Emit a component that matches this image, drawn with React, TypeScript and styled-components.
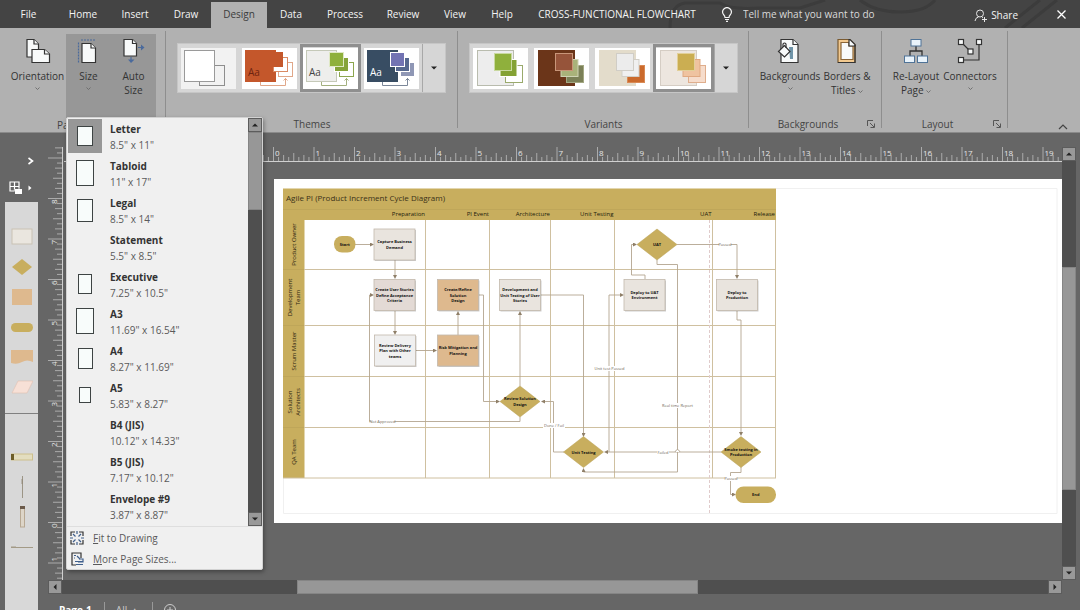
import React from "react";
import styled, { createGlobalStyle } from "styled-components";

const GlobalStyle = createGlobalStyle`
  * { box-sizing: border-box; }
  body { margin: 0; background: #666; font-family: "Open Sans", "Noto Sans", sans-serif; font-size: 10px; color: #333; }
  button, input { font: inherit; color: inherit; border: 0; padding: 0; margin: 0; background: none; }
  svg { display: block; flex: none; }
`;

/* ---------- shell ---------- */

const Shell = styled.div`
  display: flex;
  flex-direction: column;
  height: 100vh;
  overflow: hidden;
`;

const TabBar = styled.header`
  position: relative;
  display: flex;
  align-items: stretch;
  height: 28px;
  padding-top: 2px;
  background: #444;
  color: #f4f4f4;
`;

const Circuit = styled.svg`
  position: absolute;
  right: 0;
  top: 0;
`;

const Tabs = styled.nav`
  display: flex;
  position: relative;
`;

const Tab = styled.button<{ $active?: boolean; $width: number }>`
  padding-bottom: 2px;
  width: ${(p) => p.$width}px;
  white-space: nowrap;
  font-weight: ${(p) => (p.$active ? 400 : 500)};
  color: ${(p) => (p.$active ? "#3c3c3c" : "#f4f4f4")};
  background: ${(p) => (p.$active ? "#b1b1b1" : "transparent")};
`;

const TellMe = styled.label`
  position: relative;
  display: flex;
  align-items: center;
  gap: 10px;
  flex: 1;
  padding: 0 0 2px 12px;
`;

const TellInput = styled.input`
  width: 150px;
  outline: 0;
  &::placeholder { color: #dadada; opacity: 1; }
`;

const ShareButton = styled.button`
  position: relative;
  display: flex;
  align-items: center;
  gap: 4px;
  font-weight: 500;
`;

const CloseButton = styled.button`
  position: relative;
  display: grid;
  place-items: center;
  width: 38px;
  margin-left: 24px;
  padding-bottom: 2px;
`;

/* ---------- ribbon ---------- */

const Ribbon = styled.section`
  display: flex;
  height: 105px;
  background: #b1b1b1;
  border-bottom: 1px solid #8a8a8a;
`;

const Group = styled.div<{ $width: number }>`
  position: relative;
  display: flex;
  flex-direction: column;
  flex: none;
  width: ${(p) => p.$width}px;
  padding-top: 6px;
  &::after {
    content: "";
    position: absolute;
    right: 0;
    top: 3px;
    bottom: 4px;
    width: 1px;
    background: #8e8e8e;
  }
`;

const GroupBody = styled.div<{ $inset: number }>`
  display: flex;
  height: 84px;
  padding-left: ${(p) => p.$inset}px;
`;

const Caption = styled.div`
  display: flex;
  align-items: center;
  height: 16px;
  color: #444;
  & > svg { margin-right: 7px; }
`;

const CaptionText = styled.span`
  flex: 1;
  text-align: center;
`;

const Tool = styled.button<{ $width: number }>`
  display: flex;
  flex-direction: column;
  align-items: center;
  width: ${(p) => p.$width}px;
  padding-top: 4px;
  line-height: 14px;
  color: #333;
  & > svg:last-child { margin-top: 4px; }
`;

const ToolLabel = styled.span`
  margin-top: 5px;
  white-space: pre;
`;

const Pressed = styled.div`
  position: relative;
  display: flex;
  width: 90px;
  height: 84px;
  background: #979797;
`;

const Gallery = styled.div`
  display: flex;
  height: 50px;
  margin: 9px 0 0 11px;
  border: 1px solid #c6c6c6;
  background: #d6d6d6;
`;

const Thumb = styled.button<{ $on?: boolean }>`
  display: grid;
  place-items: center;
  width: 61px;
  border: 3px solid ${(p) => (p.$on ? "#8f8f8f" : "transparent")};
`;

const GalleryMore = styled.button`
  display: grid;
  place-items: center;
  width: 23px;
  border-left: 1px solid #a8a8a8;
`;

const Collapse = styled.button`
  align-self: flex-end;
  margin: 0 12px 1px auto;
`;

/* ---------- page size menu ---------- */

const Menu = styled.div`
  position: absolute;
  z-index: 5;
  left: 0;
  top: 83px;
  width: 197px;
  background: #f0f0f0;
  border: 1px solid #d2d2d2;
  border-radius: 2px;
  box-shadow: 1px 2px 4px rgba(0, 0, 0, 0.35);
`;

const MenuScroll = styled.div`
  display: flex;
  height: 409px;
  border-bottom: 1px solid #dedede;
`;

const SizeList = styled.div`
  flex: 1;
  padding: 1px;
`;

const SizeItem = styled.button`
  display: flex;
  width: 100%;
  height: 37px;
  text-align: left;
`;

const SizeIcon = styled.span<{ $on?: boolean }>`
  display: grid;
  place-items: center;
  width: 34px;
  height: 34px;
  background: ${(p) => (p.$on ? "#979797" : "transparent")};
`;

const SizeText = styled.span`
  display: flex;
  flex-direction: column;
  padding: 2px 0 0 8px;
  line-height: 16px;
  color: #5a5a5a;
`;

const SizeName = styled.strong`
  font-weight: 700;
  color: #333;
`;

const Command = styled.button`
  display: flex;
  align-items: center;
  gap: 9px;
  width: 100%;
  height: 21px;
  padding-left: 3px;
  color: #5a5a5a;
`;

/* ---------- scroll bars ---------- */

const VBar = styled.div`
  display: flex;
  flex-direction: column;
  flex: none;
  width: 14px;
  background: #4f4f4f;
`;

const HBar = styled.div`
  display: flex;
  flex: none;
  height: 14px;
  margin-right: 14px;
  background: #4f4f4f;
`;

const Arrow = styled.button`
  display: grid;
  place-items: center;
  flex: none;
  width: 14px;
  height: 14px;
  background: #999;
  border: 1px solid #5c5c5c;
`;

const Track = styled.div<{ $row?: boolean }>`
  display: flex;
  flex-direction: ${(p) => (p.$row ? "row" : "column")};
  flex: 1;
`;

const Gap = styled.div<{ $grow: number }>`
  flex: ${(p) => p.$grow} 0 0;
`;

const Knob = styled.div<{ $grow: number }>`
  flex: ${(p) => p.$grow} 0 0;
  background: #979797;
  border: 1px solid #858585;
`;

/* ---------- workspace ---------- */

const Workspace = styled.main`
  display: flex;
  flex: 1;
  min-height: 0;
  background: #666;
`;

const ShapesPane = styled.aside`
  display: flex;
  flex-direction: column;
  flex: none;
  width: 48px;
  padding: 22px 10px 0 5px;
`;

const PaneButton = styled.button<{ $end?: boolean }>`
  display: flex;
  align-items: center;
  justify-content: ${(p) => (p.$end ? "flex-end" : "flex-start")};
  gap: 5px;
  height: ${(p) => (p.$end ? 12 : 42)}px;
  padding: 0 4px;
`;

const Stencil = styled.div`
  display: flex;
  flex-direction: column;
  flex: 1;
  margin-top: -7px;
  padding-top: 20px;
  background: #d8d8d8;
`;

const StencilItem = styled.button`
  display: grid;
  place-items: center;
  height: 30px;
`;

const StencilRule = styled.hr`
  width: 100%;
  height: 1px;
  margin: 11px 0 28px;
  border: 0;
  background: #808080;
`;

const Editor = styled.div`
  display: flex;
  flex-direction: column;
  flex: 1;
  min-width: 0;
  padding: 14px 4px 0 0;
`;

const Stage = styled.div`
  display: flex;
  flex: none;
  height: 433px;
`;

const SideRuler = styled.div`
  flex: none;
  width: 16px;
  overflow: hidden;
`;

const View = styled.div`
  flex: 1;
  min-width: 0;
  overflow: hidden;
`;

const Sheet = styled.div`
  height: 344px;
  margin: 16px 0 0 210px;
  overflow: hidden;
  background: #fff;
`;

const PageTabs = styled.div`
  display: flex;
  flex: none;
  align-items: center;
  gap: 11px;
  height: 32px;
  padding-left: 11px;
  color: #f4f4f4;
`;

const PageTab = styled.button<{ $on?: boolean }>`
  padding-right: 12px;
  border-right: 1px solid #999;
  font-weight: ${(p) => (p.$on ? 700 : 400)};
  line-height: 16px;
  color: ${(p) => (p.$on ? "#fff" : "#ccc")};
`;

/* ---------- small drawings ---------- */

const Tri = ({ d, fill = "#222" }: { d: "up" | "down" | "left" | "right"; fill?: string }) => {
  const paths = { up: "M1 5.500 4 2.500 7 5.500z", down: "M1 2.500 4 5.500 7 2.500z", left: "M5.500 1 2.500 4 5.500 7z", right: "M2.500 1 5.500 4 2.500 7z" };
  return <svg width="8" height="8" viewBox="0 0 8 8"><path d={paths[d]} fill={fill} /></svg>;
};

const CaretSvg = styled.svg`
  display: inline-block;
  vertical-align: middle;
`;

const Caret = () => (
  <CaretSvg width="5" height="3" viewBox="0 0 5 3">
    <path d="M0.500 0.500 2.500 2.500 4.500 0.500" fill="none" stroke="#6a6a6a" strokeWidth="0.900" />
  </CaretSvg>
);

const OrientationIcon = () => (
  <svg width="26" height="26" viewBox="0 0 26 26" fill="#f8fafa" stroke="#333" strokeWidth="1.200">
    <path d="M2 1.500h7l4.500 4.500v13H2z" /><path d="M9 1.500V6h4.500" />
    <path d="M7 11.500h12.500l5 4.500v8.500H7z" /><path d="M19.500 11.500V16h5" />
  </svg>
);

const SizeIconArt = () => (
  <svg width="26" height="26" viewBox="0 0 26 26" fill="#f8fafa" stroke="#333" strokeWidth="1.200">
    <path d="M6 5.500h9l4.500 4.500v14.500H6z" /><path d="M15 5.500V10h4.500" />
    <path d="M5 2h15M2.500 4.500v20" stroke="#4a6a9c" strokeDasharray="2 1" />
  </svg>
);

const AutoSizeIcon = () => (
  <svg width="26" height="26" viewBox="0 0 26 26" fill="#f8fafa" stroke="#333" strokeWidth="1.200">
    <path d="M3 1.500h8.500l4 4V18H3z" /><path d="M11.500 1.500v4h4" />
    <path d="M17 9.500h5M10 19v4" stroke="#4a6a9c" /><path d="M20 6.500 23.500 9.500 20 12.500zM7 21.500h6.500L10 25z" fill="#4a6a9c" stroke="none" />
  </svg>
);

const BackgroundsIcon = () => (
  <svg width="26" height="26" viewBox="0 0 26 26" fill="#f8fafa" stroke="#333" strokeWidth="1.200">
    <path d="M4 1.500h12l5 5v18H4z" /><path d="M16 1.500v5h5" />
    <path d="M12 9h4v12h-3z" fill="#6f94a8" stroke="none" />
    <path d="M1.500 13.500 7.500 7.500l5.500 6-5.500 5.500z" /><path d="M6 9V6q1.500-2 3 0v4" fill="none" />
  </svg>
);

const BordersIcon = () => (
  <svg width="26" height="26" viewBox="0 0 26 26" fill="#f2c98f" stroke="#333" strokeWidth="1.200">
    <path d="M4 1.500h12l5 5v18H4z" stroke="#7a5a30" /><path d="M7 4.500h8V8h4v13.500H7z" fill="#f8fafa" stroke="#8a6538" />
    <path d="M15 1.500V8h6V6.500L16 1.500z" fill="#f8fafa" /><path d="M21 7v17.500H4" fill="none" />
  </svg>
);

const ReLayoutIcon = () => (
  <svg width="26" height="26" viewBox="0 0 26 26" fill="#e9f3fb" stroke="#4f7397">
    <path d="M13 8v5M7 18v-5h12v5" fill="none" stroke="#333" strokeWidth="1.300" />
    <rect x="8" y="1.500" width="10" height="6.500" /><rect x="1.500" y="18" width="10" height="6.500" /><rect x="14.500" y="18" width="10" height="6.500" />
  </svg>
);

const ConnectorsIcon = () => (
  <svg width="26" height="26" viewBox="0 0 26 26" fill="#f8fafa" stroke="#333" strokeWidth="1.200">
    <path d="M4 4l9 9M22 4v18H4" fill="none" />
    <rect x="1.500" y="1.500" width="5" height="5" /><rect x="19.500" y="1.500" width="5" height="5" /><rect x="11" y="11" width="5" height="5" /><rect x="1.500" y="19.500" width="5" height="5" />
  </svg>
);

const Launcher = () => (
  <svg width="8" height="8" viewBox="0 0 8 8" fill="none" stroke="#555"><path d="M0.500 6V0.500H6M3 3l4 4M7.500 3.500v4h-4" /></svg>
);

type ThemeArt = { main: string; edge: string; boxes: [string, string][]; aa?: string; link?: string };

const themes: ThemeArt[] = [
  { main: "#fff", edge: "#9a9a9a", boxes: [] },
  { main: "#c4572b", edge: "#c4572b", boxes: [["#fff", "#e0a789"], ["#fff", "#d98a63"], ["#c4572b", "#c4572b"]], aa: "#6e2410", link: "#e0a789" },
  { main: "#eeeeec", edge: "#c5c9b8", boxes: [["#fff", "#8ca64e"], ["#86a339", "#fff"], ["#8fb03c", "#dfe8c4"]], aa: "#444", link: "#a3b07e" },
  { main: "#384d63", edge: "#384d63", boxes: [["#8f97b5", "#fff"], ["#56688f", "#fff"], ["#7273b3", "#fff"]], aa: "#fff", link: "#7b8799" },
];

const ThemeThumb = ({ art }: { art: ThemeArt }) => (
  <svg width="55" height="41" viewBox="0 0 55 41">
    <rect width="55" height="41" fill={art.boxes.length ? "#fff" : "#f2f2f2"} />
    {art.boxes.length === 0 && <rect x="18.500" y="17.500" width="25" height="20" fill="none" stroke="#8e8e8e" />}
    {art.link && <path d="M18.500 34v3.500h25V30M41.500 32.500l2-2 2 2" fill="none" stroke={art.link} />}
    <rect x="3.500" y="2.500" width="30" height="31" fill={art.main} stroke={art.edge} />
    {art.boxes.map(([fill, edge], i) => (
      <rect key={i} x={36.5 - i * 5} y={14.5 - i * 5} width="14" height="14" fill={fill} stroke={edge} />
    ))}
    {art.aa && <text x="6" y="28" fontSize="10" fill={art.aa}>Aa</text>}
  </svg>
);

const variants: ThemeArt[] = [
  { main: "#ededed", edge: "#b9bcae", boxes: [["#fff", "#9aaa6c"], ["#84a234", "#fff"], ["#8fb03c", "#c9d9a0"]] },
  { main: "#6b3519", edge: "#6b3519", boxes: [["#7b8057", "#a3a883"], ["#a9b27a", "#cfd3b4"], ["#96543a", "#c99679"]] },
  { main: "#e3dccb", edge: "#e3dccb", boxes: [["#cb6a2c", "#d98a55"], ["#f0f0f0", "#d2cfc8"], ["#ececec", "#d0cdc6"]] },
  { main: "#ede6df", edge: "#d5cdc4", boxes: [["#f6dccb", "#dfae8d"], ["#efc3a0", "#e0a982"], ["#cbae52", "#e2d09a"]] },
];

const VariantThumb = ({ art }: { art: ThemeArt }) => (
  <svg width="55" height="41" viewBox="0 0 55 41">
    <rect width="55" height="41" fill="#fff" />
    <rect x="4.500" y="2.500" width="36" height="35" fill={art.main} stroke={art.edge} />
    {art.boxes.map(([fill, edge], i) => (
      <rect key={i} x={32.5 - i * 5.500} y={17.500 - i * 6} width="17" height="17" fill={fill} stroke={edge} />
    ))}
  </svg>
);

/* ---------- rulers ---------- */

const INCH = 40.5;

const TopRuler = () => {
  const ticks = [];
  for (let i = -40; i <= 240; i++) {
    const x = 209.5 + (i * INCH) / 8;
    if (x < 0) continue;
    const top = i % 8 === 0 ? 0 : i % 4 === 0 ? 6 : i % 2 === 0 ? 8 : 10;
    ticks.push(<path key={i} d={`M${x} ${top}V15`} />);
  }
  return (
    <svg width="1400" height="16" viewBox="0 0 1400 16" stroke="#bdbdbd" strokeWidth="0.8">
      {ticks}
      <path d="M0 14.500H1400" stroke="#d0d0d0" strokeWidth="1" />
      {Array.from({ length: 20 }, (_, n) => (
        <text key={n} x={211 + n * INCH} y="9" fontSize="8" fill="#e6e6e6" stroke="none">{n}</text>
      ))}
    </svg>
  );
};

const LeftRuler = () => {
  const ticks = [];
  for (let i = -12; i <= 77; i++) {
    const y = 375.5 - (i * INCH) / 8;
    const left = i % 8 === 0 ? 0 : i % 4 === 0 ? 5 : i % 2 === 0 ? 7 : 9;
    ticks.push(<path key={i} d={`M${left} ${y}H15`} />);
  }
  return (
    <svg width="16" height="433" viewBox="0 0 16 433" stroke="#bdbdbd" strokeWidth="0.8">
      {ticks}
      <path d="M14.500 0V433" stroke="#d0d0d0" strokeWidth="1" />
      {[-1, 0, 1, 2, 3, 4, 5, 6, 7, 8].map((n) => (
        <text key={n} transform={`translate(9 ${375 - n * INCH + (n < 0 ? -1 : 6)}) rotate(-90)`} fontSize="8" fill="#e6e6e6" stroke="none">{Math.abs(n)}</text>
      ))}
    </svg>
  );
};

/* ---------- diagram ---------- */

const GOLD = "#c8ae5e";
const STONE = "#e9e4de";
const PEACH = "#deb98e";

const Lines = ({ x, y, rows }: { x: number; y: number; rows: string[] }) => (
  <text fontSize="4" fontWeight="700" fill="#111" textAnchor="middle">
    {rows.map((r, i) => (
      <tspan key={i} x={x} y={y + 1.5 + (i - (rows.length - 1) / 2) * 5.5}>{r}</tspan>
    ))}
  </text>
);

const Box = ({ x, y, fill = STONE, rows }: { x: number; y: number; fill?: string; rows: string[] }) => (
  <g>
    <rect x={x + 1} y={y + 1} width="41" height="31" fill="#000" opacity="0.200" />
    <rect x={x} y={y} width="41" height="31" fill={fill} stroke="#c2b8ac" strokeWidth="0.800" />
    <Lines x={x + 20.5} y={y + 15.5} rows={rows} />
  </g>
);

const Decision = ({ x, y, rows }: { x: number; y: number; rows: string[] }) => (
  <g>
    <path d={`M${x - 20} ${y}L${x} ${y - 15.5}L${x + 20} ${y}L${x} ${y + 15.5}z`} fill={GOLD} stroke="#b9a056" strokeWidth="0.5" />
    <Lines x={x} y={y} rows={rows} />
  </g>
);

const Pill = ({ x, y, w, label }: { x: number; y: number; w: number; label: string }) => (
  <g>
    <rect x={x} y={y} width={w} height="16.500" rx="8" fill={GOLD} />
    <Lines x={x + w / 2} y={y + 8} rows={[label]} />
  </g>
);

const phases: [string, number][] = [["Preparation", 425], ["PI Event", 489], ["Architecture", 550], ["Unit Testing", 613.5], ["UAT", 711.5], ["Release", 775]];
const lanes: [string[], number][] = [[["Product Owner"], 244.5], [["Development", "Team"], 297.5], [["Scrum Master"], 351], [["Solution", "Architects"], 402], [["QA Team"], 452]];
const links = [
  "M355 244.500H372", "M395 260V277", "M395 311V333", "M416 350.500H435", "M458 335V313",
  "M479 295H483.500V401.500H498", "M520 386V313", "M520 417V421.500H369.500V295H372", "M541 295H583.500V435",
  "M564 452H553.500V401.500H543", "M721 452H606", "M609 452V295H622", "M645 279V275H631.500V244.500H635",
  "M657 260V264.500H677.500V472H583.500V470", "M677 244.500H737V277", "M737 311V320H741V434", "M741 467V472.500H730.500V494.500H734",
];
const notes: [string, number, number][] = [["Not Approved", 382.5, 423], ["Unit test Passed", 609.5, 370], ["Real time Report", 677.5, 407], ["Done / Fail", 554, 427], ["Failed", 663, 453.5], ["Passed", 725, 246], ["Passed", 731, 480]];

const Diagram = () => (
  <svg width="1000" height="344" viewBox="274 179 1000 344">
    <defs>
      <marker id="tip" viewBox="0 0 4 4" refX="2" refY="2" markerWidth="4" markerHeight="4" markerUnits="userSpaceOnUse" orient="auto">
        <path d="M0 0 4 2 0 4z" fill="#8f7f68" />
      </marker>
    </defs>
    <path d="M283.500 478V513.500H1057M776 188.500H1057V513.500" fill="none" stroke="#f0f0f0" />
    <path d="M283 188.500H776V220H304.500V478H283z" fill={GOLD} />
    <path d="M425.500 220V478M489.500 220V478M550.500 220V478M614.500 220V478M712.500 220V478M775.500 220V478M304 269.500H776M304 325.500H776M304 376.500H776M304 427.500H776M283 478H776" fill="none" stroke="#cfc0a0" />
    <path d="M283 209.500H776M283 269.500H304M283 325.500H304M283 376.500H304M283 427.500H304" stroke="#b79e54" strokeWidth="0.500" />
    <path d="M709.500 220V513" stroke="#e0cbcb" strokeDasharray="3 2" />
    <text x="286" y="201" fontSize="8" fill="#3a3118">Agile PI (Product Increment Cycle Diagram)</text>
    {phases.map(([name, x]) => <text key={name} x={x} y="216" fontSize="6" fontWeight="500" fill="#221c0c" textAnchor="end">{name}</text>)}
    {lanes.map(([rows, y]) => (
      <text key={rows[0]} transform={`translate(0 ${y}) rotate(-90)`} fontSize="6" fill="#2c2410" textAnchor="middle">
        {rows.map((r, i) => <tspan key={r} x="0" y={rows.length === 1 ? 296 : 292 + i * 8}>{r}</tspan>)}
      </text>
    ))}
    {links.map((d) => <path key={d} d={d} fill="none" stroke="#b3a590" strokeWidth="0.900" markerEnd="url(#tip)" />)}
    <path d="M675 452q2.500-5 5 0" fill="#fff" stroke="#a89882" strokeWidth="0.800" />
    {notes.map(([t, x, y], i) => (
      <g key={i}>
        <rect x={x - t.length} y={y - 4} width={t.length * 2} height="5" fill="#fff" />
        <text x={x} y={y} fontSize="4" fill="#6f6555" textAnchor="middle">{t}</text>
      </g>
    ))}
    <Pill x={334} y={236} w={21.5} label="Start" />
    <Pill x={735.5} y={486.5} w={40.5} label="End" />
    <Box x={374} y={229} rows={["Capture Business", "Demand"]} />
    <Box x={374} y={279.5} rows={["Create User Stories", "Define Acceptance", "Criteria"]} fill="#e3dad5" />
    <Box x={437.5} y={279.5} rows={["Create/Refine", "Solution", "Design"]} fill={PEACH} />
    <Box x={499.5} y={279.5} rows={["Development and", "Unit Testing of User", "Stories"]} />
    <Box x={374.5} y={335} rows={["Review Delivery", "Plan with Other", "teams"]} fill="#f0f0f0" />
    <Box x={437.5} y={335} rows={["Risk Mitigation and", "Planning"]} fill={PEACH} />
    <Box x={624} y={279.5} rows={["Deploy to UAT", "Environment"]} />
    <Box x={716.5} y={279.5} rows={["Deploy to", "Production"]} />
    <Decision x={657} y={244.5} rows={["UAT"]} />
    <Decision x={520} y={401.5} rows={["Review Solution", "Design"]} />
    <Decision x={583.5} y={452} rows={["Unit Testing"]} />
    <Decision x={741} y={452} rows={["Smoke testing in", "Production"]} />
  </svg>
);

/* ---------- data ---------- */

const sizes: { name: string; dims: string; w?: number; h?: number }[] = [
  { name: "Letter", dims: '8.5" x 11"', w: 15, h: 19 },
  { name: "Tabloid", dims: '11" x 17"', w: 17, h: 25 },
  { name: "Legal", dims: '8.5" x 14"', w: 15, h: 22 },
  { name: "Statement", dims: '5.5" x 8.5"' },
  { name: "Executive", dims: '7.25" x 10.5"', w: 13, h: 19 },
  { name: "A3", dims: '11.69" x 16.54"', w: 17, h: 25 },
  { name: "A4", dims: '8.27" x 11.69"', w: 14, h: 20 },
  { name: "A5", dims: '5.83" x 8.27"', w: 11, h: 15 },
  { name: "B4 (JIS)", dims: '10.12" x 14.33"' },
  { name: "B5 (JIS)", dims: '7.17" x 10.12"' },
  { name: "Envelope #9", dims: '3.87" x 8.87"' },
];

const stencilTop = [
  <rect key="a" x="1" y="3" width="20" height="15" fill="#eae6df" stroke="#c9c2b4" />,
  <path key="b" d="M1 11 11 3 21 11 11 19z" fill={GOLD} />,
  <rect key="c" x="1" y="3" width="20" height="16" fill={PEACH} />,
  <rect key="d" x="0" y="7" width="22" height="9" rx="4.500" fill={GOLD} />,
  <path key="e" d="M0 4H22V16Q16 13 11 16T0 17z" fill={PEACH} />,
  <path key="f" d="M1 17 7 5H22L16 17z" fill="#f7e0d6" stroke="#dfbfb0" strokeWidth="0.600" />,
];

const stencilBottom = [
  <g key="a"><rect x="0.500" y="8" width="21" height="6" fill="#e3ddbf" stroke="#cdbf8c" /><rect x="0" y="8" width="3" height="6" fill="#6d5d27" /></g>,
  <path key="b" d="M11.500 0V22M11 3V8" stroke="#8d8471" strokeWidth="0.800" />,
  <g key="c"><rect x="9.500" y="1" width="4" height="20" fill="#ddd5c8" stroke="#b7a893" /><rect x="9" y="0" width="5" height="3" fill="#6b5a4a" /></g>,
  <path key="d" d="M0 11.500H22M0 11H5" stroke="#a39a86" />,
];

const tabs: [string, number][] = [
  ["File", 57], ["Home", 52], ["Insert", 52], ["Draw", 50], ["Design", 56], ["Data", 48],
  ["Process", 60], ["Review", 56], ["View", 48], ["Help", 46], ["CROSS-FUNCTIONAL FLOWCHART", 184],
];

export default function App() {
  return (
    <>
      <GlobalStyle />
      <Shell>
        <TabBar>
          <Circuit width="470" height="28" viewBox="0 0 470 28" fill="none" stroke="#3c3c3c" strokeWidth="3">
            <path d="M60 28Q60 5 75 3H110Q120 10 150 8H190L215 0M250 0Q265 12 290 12T325 0M395 28 430 0M412 28 447 0" />
          </Circuit>
          <Tabs>
            {tabs.map(([t, w]) => <Tab key={t} $active={t === "Design"} $width={w}>{t}</Tab>)}
          </Tabs>
          <TellMe>
            <svg width="12" height="15" viewBox="0 0 12 15" fill="none" stroke="#f4f4f4" strokeWidth="1.200">
              <path d="M4 10.500Q4 9 2.500 7.500A4.300 4.300 0 1 1 9.500 7.500Q8 9 8 10.500zM4 12.500h4M5 14.300h2" />
            </svg>
            <TellInput placeholder="Tell me what you want to do" aria-label="Tell me what you want to do" />
          </TellMe>
          <ShareButton>
            <svg width="13" height="13" viewBox="0 0 13 13" fill="none" stroke="#e6e6e6">
              <circle cx="6" cy="4.500" r="3.500" /><path d="M1 12Q1.500 8.500 4.500 8M8 8.200 9 9M8 10.500h5M10.500 8v5" />
            </svg>
            Share
          </ShareButton>
          <CloseButton aria-label="Close">
            <svg width="9" height="9" viewBox="0 0 9 9" stroke="#fff" strokeWidth="1.300"><path d="M0.500 0.500 8.500 8.500M8.500 0.500 0.500 8.500" /></svg>
          </CloseButton>
        </TabBar>

        <Ribbon>
          <Group $width={166}>
            <GroupBody $inset={9}>
              <Tool $width={57}><OrientationIcon /><ToolLabel>Orientation</ToolLabel><Caret /></Tool>
              <Pressed>
                <Tool $width={45}><SizeIconArt /><ToolLabel>Size</ToolLabel><Caret /></Tool>
                <Tool $width={45}><AutoSizeIcon /><ToolLabel>{"Auto\nSize"}</ToolLabel></Tool>
                <Menu>
                  <MenuScroll>
                    <SizeList>
                      {sizes.map((s) => (
                        <SizeItem key={s.name}>
                          <SizeIcon $on={s.name === "Letter"}>
                            {s.w && s.h && (
                              <svg width={s.w + 1} height={s.h + 1}>
                                <rect x="0.500" y="0.500" width={s.w} height={s.h} fill="#f8fcfb" stroke="#3e4444" />
                              </svg>
                            )}
                          </SizeIcon>
                          <SizeText><SizeName>{s.name}</SizeName>{s.dims}</SizeText>
                        </SizeItem>
                      ))}
                    </SizeList>
                    <VBar>
                      <Arrow aria-label="Scroll up"><Tri d="up" /></Arrow>
                      <Track><Knob $grow={76} /><Gap $grow={304} /></Track>
                      <Arrow aria-label="Scroll down"><Tri d="down" /></Arrow>
                    </VBar>
                  </MenuScroll>
                  <Command>
                    <svg width="14" height="14" viewBox="0 0 14 14" fill="none" stroke="#3f5f8c" strokeWidth="1.200">
                      <path d="M1 5V1h4M9 1h4v4M13 9v4H9M5 13H1V9" stroke="#333" />
                      <path d="M3 3l2.500 2.500M11 3 8.500 5.500M3 11l2.500-2.500M11 11 8.500 8.500M7 0v3M7 11v3M0 7h3M11 7h3" />
                    </svg>
                    <span><u>F</u>it to Drawing</span>
                  </Command>
                  <Command>
                    <svg width="14" height="14" viewBox="0 0 14 14" fill="none" stroke="#3f5f8c" strokeWidth="1.200">
                      <path d="M6 13H2V1h9v5" stroke="#333" /><path d="M4 3.500h2M4 6h1M7 4l3 3" />
                      <path d="M5 9.500h8M6 12.500h7M9 7h4v3H8" />
                    </svg>
                    <span><u>M</u>ore Page Sizes...</span>
                  </Command>
                </Menu>
              </Pressed>
            </GroupBody>
            <Caption><CaptionText>Page Setup</CaptionText></Caption>
          </Group>
          <Group $width={292}>
            <GroupBody $inset={0}>
              <Gallery>
                {themes.map((t, i) => <Thumb key={i} $on={i === 2} aria-label={`Theme ${i + 1}`}><ThemeThumb art={t} /></Thumb>)}
                <GalleryMore aria-label="More themes"><Tri d="down" /></GalleryMore>
              </Gallery>
            </GroupBody>
            <Caption><CaptionText>Themes</CaptionText></Caption>
          </Group>
          <Group $width={291}>
            <GroupBody $inset={0}>
              <Gallery>
                {variants.map((t, i) => <Thumb key={i} $on={i === 3} aria-label={`Variant ${i + 1}`}><VariantThumb art={t} /></Thumb>)}
                <GalleryMore aria-label="More variants"><Tri d="down" /></GalleryMore>
              </Gallery>
            </GroupBody>
            <Caption><CaptionText>Variants</CaptionText></Caption>
          </Group>
          <Group $width={133}>
            <GroupBody $inset={10}>
              <Tool $width={62}><BackgroundsIcon /><ToolLabel>Backgrounds</ToolLabel><Caret /></Tool>
              <Tool $width={52}><BordersIcon /><ToolLabel>{"Borders &\nTitles "}<Caret /></ToolLabel></Tool>
            </GroupBody>
            <Caption><CaptionText>Backgrounds</CaptionText><Launcher /></Caption>
          </Group>
          <Group $width={126}>
            <GroupBody $inset={8}>
              <Tool $width={52}><ReLayoutIcon /><ToolLabel>{"Re-Layout\nPage "}<Caret /></ToolLabel></Tool>
              <Tool $width={56}><ConnectorsIcon /><ToolLabel>Connectors</ToolLabel><Caret /></Tool>
            </GroupBody>
            <Caption><CaptionText>Layout</CaptionText><Launcher /></Caption>
          </Group>
          <Collapse aria-label="Collapse the ribbon">
            <svg width="10" height="8" viewBox="0 0 10 8" fill="none" stroke="#444" strokeWidth="1.200"><path d="M1 6 5 2 9 6" /></svg>
          </Collapse>
        </Ribbon>

        <Workspace>
          <ShapesPane>
            <PaneButton $end aria-label="Expand the Shapes window">
              <svg width="6" height="8" viewBox="0 0 6 8" fill="none" stroke="#fff" strokeWidth="1.600"><path d="M0.500 1 4.500 4 0.500 7" /></svg>
            </PaneButton>
            <PaneButton aria-label="Stencils">
              <svg width="14" height="14" viewBox="0 0 14 14" fill="none" stroke="#fff" strokeWidth="1.200">
                <path d="M1 1h9v9H1zM5.500 1v9M1 5.500h9" /><path d="M6 8h7v5H6z" fill="#fff" stroke="#666" strokeWidth="0.600" /><path d="M6 8h7v5H6zM8 6.500h4" fill="#fff" stroke="none" />
              </svg>
              <svg width="4" height="6" viewBox="0 0 4 6"><path d="M0.500 0.500 3.500 3 0.500 5.500z" fill="#fff" /></svg>
            </PaneButton>
            <Stencil>
              {stencilTop.map((s, i) => <StencilItem key={i} aria-label={`Shape ${i + 1}`}><svg width="22" height="22" viewBox="0 0 22 22">{s}</svg></StencilItem>)}
              <StencilRule />
              {stencilBottom.map((s, i) => <StencilItem key={i} aria-label={`Connector ${i + 1}`}><svg width="22" height="22" viewBox="0 0 22 22">{s}</svg></StencilItem>)}
            </Stencil>
          </ShapesPane>
          <Editor>
            <Stage>
              <SideRuler><LeftRuler /></SideRuler>
              <View>
                <TopRuler />
                <Sheet><Diagram /></Sheet>
              </View>
              <VBar>
                <Arrow aria-label="Scroll up"><Tri d="up" /></Arrow>
                <Track><Gap $grow={107} /><Knob $grow={222} /><Gap $grow={76} /></Track>
                <Arrow aria-label="Scroll down"><Tri d="down" /></Arrow>
              </VBar>
            </Stage>
            <HBar>
              <Arrow aria-label="Scroll left"><Tri d="left" /></Arrow>
              <Track $row><Gap $grow={235} /><Knob $grow={400} /><Gap $grow={351} /></Track>
              <Arrow aria-label="Scroll right"><Tri d="right" /></Arrow>
            </HBar>
            <PageTabs>
              <PageTab $on>Page-1</PageTab>
              <PageTab>All ▲</PageTab>
              <svg width="12" height="12" viewBox="0 0 12 12" fill="none" stroke="#ccc"><circle cx="6" cy="6" r="5.500" /><path d="M6 3v6M3 6h6" /></svg>
            </PageTabs>
          </Editor>
        </Workspace>
      </Shell>
    </>
  );
}
